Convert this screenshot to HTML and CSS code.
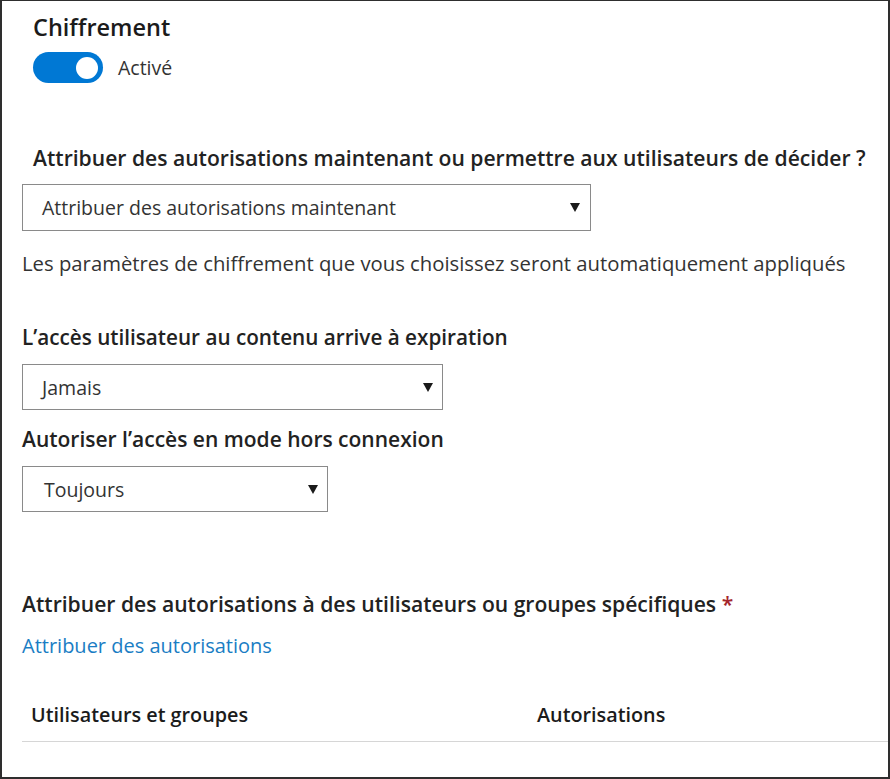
FILE: index.html
```html
<!DOCTYPE html>
<html lang="fr">
<head>
<meta charset="utf-8">
<title>Chiffrement</title>
<link rel="stylesheet" href="styles.css">
</head>
<body>
<div class="frame">
  <div class="header">
    <h1 class="title">Chiffrement</h1>
    <div class="toggle-row">
      <span class="toggle"><span class="knob"></span></span>
      <span class="toggle-label">Activé</span>
    </div>
    <div class="label q">Attribuer des autorisations maintenant ou permettre aux utilisateurs de décider ?</div>
  </div>
  <div class="select sel1"><span class="select-text">Attribuer des autorisations maintenant</span><span class="caret"></span></div>
  <div class="desc">Les paramètres de chiffrement que vous choisissez seront automatiquement appliqués</div>
  <div class="label l2">L’accès utilisateur au contenu arrive à expiration</div>
  <div class="select sel2"><span class="select-text">Jamais</span><span class="caret"></span></div>
  <div class="label l3">Autoriser l’accès en mode hors connexion</div>
  <div class="select sel3"><span class="select-text">Toujours</span><span class="caret"></span></div>
  <div class="label l4">Attribuer des autorisations à des utilisateurs ou groupes spécifiques <span class="req">*</span></div>
  <a class="link" href="#">Attribuer des autorisations</a>
  <div class="table-head">
    <span class="col1">Utilisateurs et groupes</span>
    <span class="col2">Autorisations</span>
  </div>
</div>
</body>
</html>
```

FILE: styles.css
```css
* { box-sizing: border-box; }
html, body { margin: 0; padding: 0; background: #fff; }
body { font-family: "Open Sans", "Noto Sans", "Liberation Sans", sans-serif; color: #323130; }

.frame {
  width: 890px;
  height: 779px;
  border: 2px solid #2e2e2e;
  border-top-width: 1px;
  padding: 0 0 0 20px;
  overflow: hidden;
}

.header { padding-left: 11px; }

.title {
  margin: 11px 0 0;
  font-size: 23.5px;
  line-height: 30px;
  font-weight: 600;
  color: #1b1b1b;
}

.toggle-row {
  display: flex;
  align-items: center;
  gap: 15px;
  margin-top: 10px;
  height: 31px;
}
.toggle {
  width: 70px;
  height: 31px;
  border-radius: 16px;
  background: #0078d4;
  display: flex;
  align-items: center;
  justify-content: flex-end;
  padding-right: 5px;
}
.knob {
  width: 22px;
  height: 22px;
  border-radius: 50%;
  background: #fff;
}
.toggle-label { font-size: 19.5px; color: #333; }

.label {
  font-size: 21px;
  line-height: 26px;
  font-weight: 600;
  color: #222;
}
.q { margin-top: 62px; font-size: 21.1px; }

.select {
  display: flex;
  align-items: center;
  justify-content: space-between;
  border: 1px solid #8a8a8a;
  font-size: 19.5px;
  color: #333;
}
.select-text { padding-left: 19px; }
.caret {
  width: 0;
  height: 0;
  border-left: 5px solid transparent;
  border-right: 5px solid transparent;
  border-top: 9px solid #1a1a1a;
}
.sel1 { width: 569px; height: 47px; margin-top: 13px; padding-right: 10px; }
.sel2 { width: 421px; height: 46px; margin-top: 14px; padding-right: 9px; }
.sel3 { width: 306px; height: 46px; margin-top: 14px; padding-right: 9px; }
.sel3 .select-text { padding-left: 21px; }

.desc {
  margin-top: 20px;
  font-size: 20.3px;
  line-height: 24px;
  color: #333;
}

.l2 { margin-top: 49px; font-size: 20.7px; }
.l3 { margin-top: 16px; }
.l4 { margin-top: 79px; font-size: 21.1px; }
.req { color: #a4262c; }

.link {
  display: block;
  margin-top: 17px;
  font-size: 20px;
  line-height: 24px;
  color: #1a7dc4;
  text-decoration: none;
}

.table-head {
  display: grid;
  grid-template-columns: 506px 1fr;
  margin-top: 44px;
  padding: 0 0 13px 9px;
  border-bottom: 1px solid #d6d6d6;
  font-size: 19.8px;
  line-height: 26px;
  font-weight: 600;
  color: #1b1b1b;
}
```
